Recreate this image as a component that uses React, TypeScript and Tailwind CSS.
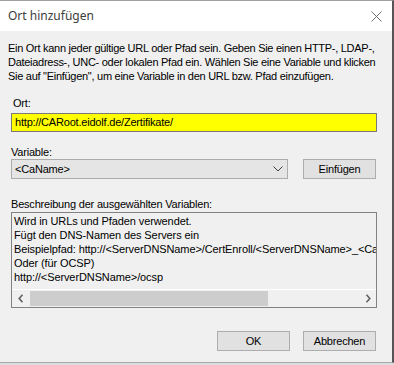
import React from "react";

const font = { fontFamily: '"Liberation Sans", Arial, sans-serif' };

function ChevronDown() {
  return (
    <svg width="10" height="6" viewBox="0 0 10 6" className="text-[#404040]">
      <path d="M0.5 0.5 L5 5 L9.5 0.5" fill="none" stroke="currentColor" strokeWidth="1" />
    </svg>
  );
}

function Arrow({ dir }: { dir: "left" | "right" }) {
  return (
    <svg width="6" height="9" viewBox="0 0 6 9" className="text-[#606060]">
      {dir === "left" ? (
        <path d="M4.5 0.8 L1.2 4.5 L4.5 8.2" fill="none" stroke="currentColor" strokeWidth="1.6" />
      ) : (
        <path d="M1.5 0.8 L4.8 4.5 L1.5 8.2" fill="none" stroke="currentColor" strokeWidth="1.6" />
      )}
    </svg>
  );
}

function Button({ label, className = "" }: { label: string; className?: string }) {
  return (
    <div
      className={`flex h-[20px] w-[73px] shrink-0 items-center justify-center border border-[#adadad] bg-[#e1e1e1] text-[11px] text-black ${className}`}
    >
      {label}
    </div>
  );
}

export default function App() {
  const descLines = [
    "Wird in URLs und Pfaden verwendet.",
    "Fügt den DNS-Namen des Servers ein",
    "Beispielpfad: http://<ServerDNSName>/CertEnroll/<ServerDNSName>_<CaName><CertificateName>.crt",
    "Oder (für OCSP)",
    "http://<ServerDNSName>/ocsp",
  ];

  return (
    <div className="h-[365px] w-[394px] bg-[#dcdcdc]" style={font}>
      <div className="flex h-[363px] w-[394px] flex-col border-t border-r-2 border-b border-t-[#a0a0a0] border-r-[#555555] border-b-[#a8a8a8] bg-[#f0f0f0]">
        {/* Title bar */}
        <div className="flex h-[30px] shrink-0 items-center justify-between bg-white pr-[10px] pl-[8px]">
          <span
            className="text-[12px] text-[#3c3c3c]"
            style={{ fontFamily: '"Noto Sans", "Open Sans", sans-serif' }}
          >
            Ort hinzufügen
          </span>
          <svg width="11" height="11" viewBox="0 0 11 11" className="text-[#707070]">
            <path d="M0.5 0.5 L10.5 10.5 M10.5 0.5 L0.5 10.5" stroke="currentColor" strokeWidth="1" />
          </svg>
        </div>

        {/* Body */}
        <div className="flex flex-col pt-[10px] pr-[15px] pl-[8px] text-[11px] tracking-[-0.2px] text-black">
          <p className="leading-[14px] tracking-[-0.28px] whitespace-nowrap">
            Ein Ort kann jeder gültige URL oder Pfad sein. Geben Sie einen HTTP-, LDAP-,
            <br />
            Dateiadress-, UNC- oder lokalen Pfad ein. Wählen Sie eine Variable und klicken
            <br />
            Sie auf "Einfügen", um eine Variable in den URL bzw. Pfad einzufügen.
          </p>

          <span className="mt-[14px] ml-[5px] leading-[13px]">Ort:</span>
          <div className="mt-[3px] ml-[3px] flex h-[19px] w-[366px] items-center border border-[#7a7a7a] bg-[#ffff00] pl-[3px]">
            http://CARoot.eidolf.de/Zertifikate/
          </div>

          <span className="mt-[14px] ml-[3px] leading-[13px]">Variable:</span>
          <div className="ml-[3px] flex items-center">
            <div className="flex h-[20px] w-[277px] items-center justify-between border border-[#acacac] bg-[#e5e5e5] pr-[4px] pl-[3px]">
              <span>&lt;CaName&gt;</span>
              <ChevronDown />
            </div>
            <Button label="Einfügen" className="ml-[15px]" />
          </div>

          <span className="mt-[19px] ml-[3px] leading-[13px]">
            Beschreibung der ausgewählten Variablen:
          </span>
          <div className="mt-[1px] ml-[3px] flex h-[96px] w-[366px] flex-col border border-[#828282] bg-[#f0f0f0]">
            <div className="flex-1 overflow-hidden pt-[1px] pl-[2px] leading-[14px] tracking-[-0.1px] whitespace-nowrap">
              {descLines.map((l) => (
                <div key={l}>{l}</div>
              ))}
            </div>
            <div className="flex h-[18px] shrink-0 items-center border-t border-white">
              <div className="flex w-[17px] items-center justify-center">
                <Arrow dir="left" />
              </div>
              <div className="flex h-full flex-1 items-center">
                <div className="ml-[1px] h-[15px] w-[238px] bg-[#cdcdcd]" />
              </div>
              <div className="flex w-[17px] items-center justify-center">
                <Arrow dir="right" />
              </div>
            </div>
          </div>

          <div className="mt-[23px] flex justify-end gap-[13px] pr-[1px]">
            <Button label="OK" />
            <Button label="Abbrechen" />
          </div>
        </div>
      </div>
    </div>
  );
}
